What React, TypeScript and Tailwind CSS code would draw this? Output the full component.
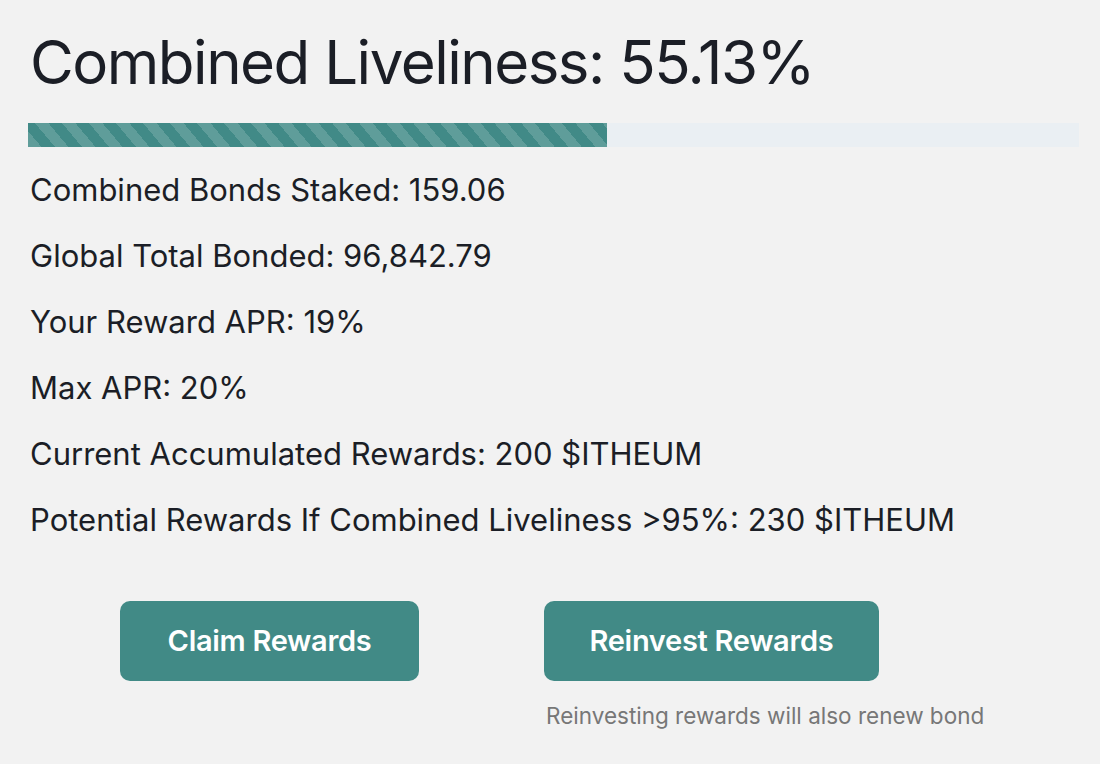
import React from "react";

const rows = [
  "Combined Bonds Staked: 159.06",
  "Global Total Bonded: 96,842.79",
  "Your Reward APR: 19%",
  "Max APR: 20%",
  "Current Accumulated Rewards: 200 $ITHEUM",
  "Potential Rewards If Combined Liveliness >95%: 230 $ITHEUM",
];

export default function App() {
  return (
    <div className="w-[1100px] h-[764px] bg-[#f2f2f2] text-[#1b1e26] font-['Inter',sans-serif] overflow-hidden">
      <div className="pl-[28px] pr-[21px] pt-[26px]">
        <h1 className="text-[60px] leading-[72px] pl-[2px] font-normal tracking-[-1.5px]">Combined Liveliness: 55.13%</h1>
        <div className="mt-[25px] h-[24px] bg-[#eaeff3] w-full">
          <div
            className="h-full bg-[repeating-linear-gradient(50deg,#5f9d9a_0px,#5f9d9a_10.3px,#418a87_10.3px,#418a87_20.7px)]"
            style={{ width: "55.13%" }}
          />
        </div>
        <div className="mt-[25px] flex flex-col gap-[30px] pl-[2px]">
          {rows.map((r) => (
            <div key={r} className="text-[31px] leading-[36px]">
              {r}
            </div>
          ))}
        </div>
        <div className="mt-[63px] flex items-start pl-[92px] gap-[125px]">
          <button className="w-[299px] h-[80px] rounded-[10px] bg-[#418a86] text-white text-[29px] font-semibold tracking-[-0.3px]">
            Claim Rewards
          </button>
          <div className="flex flex-col items-start">
            <button className="w-[335px] h-[80px] rounded-[10px] bg-[#418a86] text-white text-[29px] font-semibold tracking-[-0.3px]">
              Reinvest Rewards
            </button>
            <div className="mt-[21px] ml-[2px] text-[22.5px] leading-[28px] text-[#777777]">
              Reinvesting rewards will also renew bond
            </div>
          </div>
        </div>
      </div>
    </div>
  );
}
